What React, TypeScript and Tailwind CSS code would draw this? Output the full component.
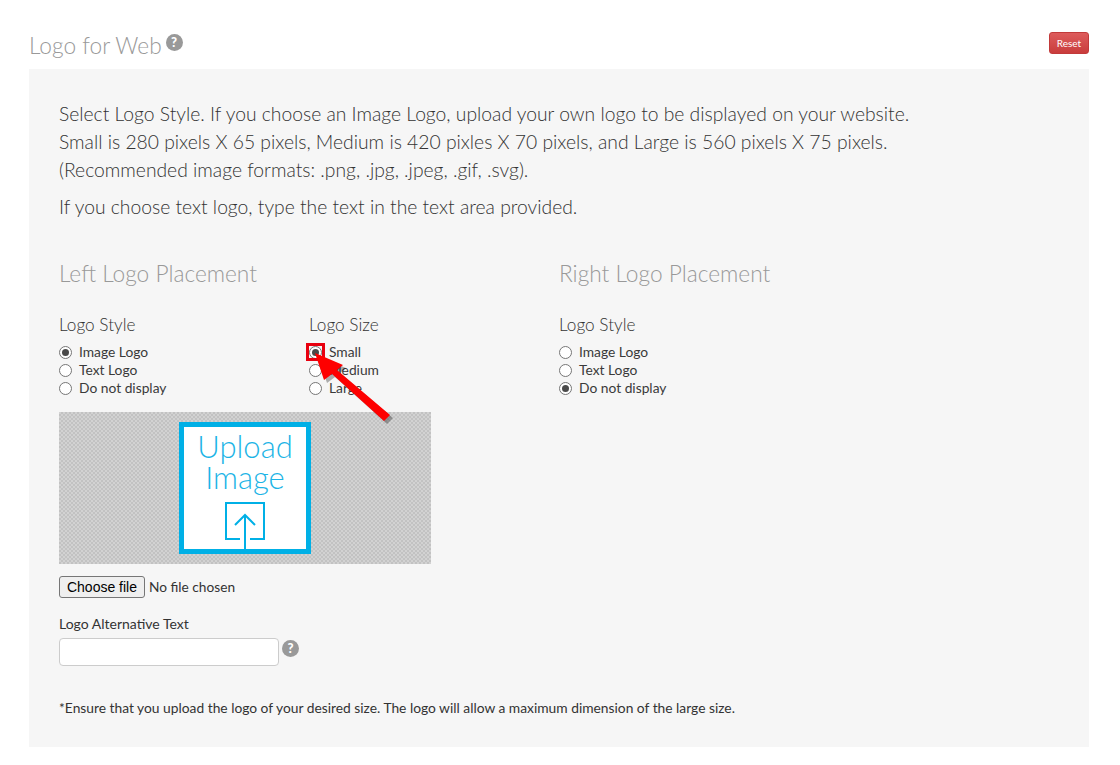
function Help({ className = "" }: { className?: string }) {
  return (
    <span
      className={`inline-flex w-[17px] h-[17px] rounded-full bg-[#999999] text-white items-center justify-center text-[13px] font-black leading-none font-['Lato','Liberation_Sans',sans-serif] ${className}`}
    >
      ?
    </span>
  );
}

function Radio({ label, checked = false }: { label: string; checked?: boolean }) {
  return (
    <label className="flex items-center h-[18px] text-[13.8px] text-[#3a3a3a] leading-[18px]">
      <span className="w-[13px] h-[13px] rounded-full border border-[#767676] bg-white flex items-center justify-center mr-[7px]">
        {checked && <span className="w-[7px] h-[7px] rounded-full bg-[#4a4a4a]" />}
      </span>
      {label}
    </label>
  );
}

function Group({ title, options, selected }: { title: string; options: string[]; selected: number }) {
  return (
    <div>
      <div className="text-[17.2px] font-light text-[#333333] leading-[24px] mb-[6px]">{title}</div>
      {options.map((o, i) => (
        <Radio key={o} label={o} checked={i === selected} />
      ))}
    </div>
  );
}

export default function App() {
  return (
    <div className="relative w-[1120px] h-[765px] bg-white font-['Lato','Liberation_Sans',sans-serif] overflow-hidden px-[29px] pt-[30px]">
      <div className="flex justify-between w-[1060px] h-[39px]">
        <div className="flex items-start">
          <h1 className="text-[22.7px] font-light text-[#999999] leading-[32px]">Logo for Web</h1>
          <Help className="ml-[4px] mt-[4px]" />
        </div>
        <button className="mt-[2px] w-[40px] h-[22px] rounded-[3px] bg-linear-to-b from-[#dd5c5c] to-[#c93c3c] border border-[#c23a3a] text-white text-[10px] leading-none">
          Reset
        </button>
      </div>

      <div className="w-[1060px] h-[678px] bg-[#f6f6f6] px-[30px] pt-[31px]">
        <div className="text-[19.3px] font-light text-[#333333] leading-[28px]">
          <p>Select Logo Style. If you choose an Image Logo, upload your own logo to be displayed on your website.</p>
          <p>Small is 280 pixels X 65 pixels, Medium is 420 pixles X 70 pixels, and Large is 560 pixels X 75 pixels.</p>
          <p>(Recommended image formats: .png, .jpg, .jpeg, .gif, .svg).</p>
          <p className="mt-[9px]">If you choose text logo, type the text in the text area provided.</p>
        </div>

        <div className="flex mt-[38px]">
          <div className="w-[500px]">
            <h2 className="text-[22.7px] font-light text-[#999999] leading-[30px] mb-[24px]">Left Logo Placement</h2>
            <div className="flex">
              <div className="w-[250px]">
                <Group title="Logo Style" options={["Image Logo", "Text Logo", "Do not display"]} selected={0} />
              </div>
              <Group title="Logo Size" options={["Small", "Medium", "Large"]} selected={0} />
            </div>

            <div className="mt-[15px] w-[372px] h-[152px] flex justify-center items-center bg-[repeating-conic-gradient(#c2c2c2_0_25%,#d2d2d2_0_50%)] bg-[length:4px_4px]">
              <div className="w-[132px] h-[132px] border-[5px] border-[#00b0e6] bg-white flex flex-col items-center text-[#1cb4e6] font-light">
                <div className="text-[31px] leading-[32px] mt-[3px]">Upload</div>
                <div className="text-[31px] leading-[31px]">Image</div>
                <svg className="mt-[9px]" width="40" height="47" viewBox="0 0 40 47" fill="none" stroke="#00b0e6" strokeWidth="2">
                  <path d="M15 37H1V1H39V37H25" />
                  <path d="M20 47V14" />
                  <path d="M10 23L20 13L30 23" />
                </svg>
              </div>
            </div>

            <div className="flex items-center mt-[12px] h-[22px]">
              <button className="w-[86px] h-[22px] bg-[#efefef] border border-[#767676] rounded-[3px] text-[14px] text-black font-['Liberation_Sans',sans-serif] leading-none">
                Choose file
              </button>
              <span className="ml-[4px] text-[13.7px] text-[#333333] leading-[20px]">No file chosen</span>
            </div>

            <div className="mt-[16px] text-[14px] text-[#333333] leading-[20px]">Logo Alternative Text</div>
            <div className="flex items-start mt-[4px]">
              <input className="w-[220px] h-[28px] rounded-[4px] border border-[#cccccc] bg-white" />
              <Help className="ml-[3px] mt-[2px]" />
            </div>
          </div>

          <div>
            <h2 className="text-[22.7px] font-light text-[#999999] leading-[30px] mb-[24px]">Right Logo Placement</h2>
            <Group title="Logo Style" options={["Image Logo", "Text Logo", "Do not display"]} selected={2} />
          </div>
        </div>

        <p className="mt-[32px] text-[13.8px] text-[#333333] leading-[20px]">
          *Ensure that you upload the logo of your desired size. The logo will allow a maximum dimension of the large size.
        </p>
      </div>

      <div className="absolute left-[306px] top-[343px] w-[19px] h-[18px] border-[3px] border-[#e8000f]" />
      <svg className="absolute left-[310px] top-[345px]" width="90" height="85" viewBox="0 0 90 85">
        <polygon points="5,8 33,20 27,25 80,70 74,76 22,29 14,35" fill="#000000" opacity="0.3" transform="translate(3 3)" />
        <polygon points="5,8 33,20 27,25 80,70 74,76 22,29 14,35" fill="#fe0000" />
      </svg>
    </div>
  );
}
